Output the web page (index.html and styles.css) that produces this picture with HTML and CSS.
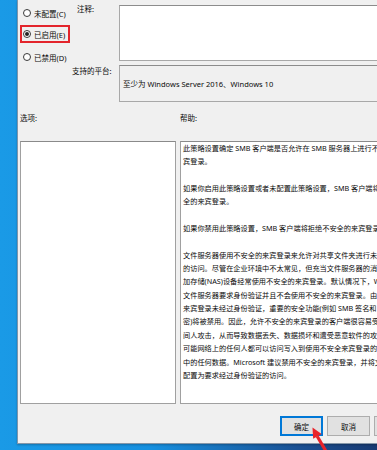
FILE: index.html
```html
<!DOCTYPE html>
<html lang="zh-CN">
<head>
<meta charset="utf-8">
<title>策略设置</title>
<link rel="stylesheet" href="styles.css">
</head>
<body>
<div class="screen">
  <div class="dialog">
    <div class="settings">
      <div class="radios">
        <div class="radio"><span class="dot"></span><span>未配置(C)</span></div>
        <div class="radio selected"><span class="dot checked"></span><span>已启用(E)</span></div>
        <div class="radio last"><span class="dot"></span><span>已禁用(D)</span></div>
      </div>
      <div class="label label-note">注释:</div>
      <div class="box box-note"></div>
      <div class="label label-platform">支持的平台:</div>
      <div class="box box-platform">至少为 Windows Server 2016、Windows 10</div>
    </div>
    <div class="panes">
      <div class="pane-title">选项:</div>
      <div class="pane-title">帮助:</div>
      <div class="pane options"></div>
      <div class="pane help">
        <div class="para">
          <div class="ln">此策略设置确定 SMB 客户端是否允许在 SMB 服务器上进行不安全的来</div>
          <div class="ln">宾登录。</div>
        </div>
        <div class="para">
          <div class="ln">如果你启用此策略设置或者未配置此策略设置，SMB 客户端将允许不安</div>
          <div class="ln">全的来宾登录。</div>
        </div>
        <div class="para">
          <div class="ln">如果你禁用此策略设置，SMB 客户端将拒绝不安全的来宾登录。</div>
        </div>
        <div class="para">
          <div class="ln">文件服务器使用不安全的来宾登录来允许对共享文件夹进行未经身份验证</div>
          <div class="ln">的访问。尽管在企业环境中不太常见，但充当文件服务器的消费者网络附</div>
          <div class="ln">加存储(NAS)设备经常使用不安全的来宾登录。默认情况下，Windows</div>
          <div class="ln">文件服务器要求身份验证并且不会使用不安全的来宾登录。由于不安全的</div>
          <div class="ln">来宾登录未经过身份验证，重要的安全功能(例如 SMB 签名和 SMB 加</div>
          <div class="ln">密)将被禁用。因此，允许不安全的来宾登录的客户端很容易受到中</div>
          <div class="ln">间人攻击，从而导致数据丢失、数据损坏和遭受恶意软件的攻击。此外，</div>
          <div class="ln">可能网络上的任何人都可以访问写入到使用不安全来宾登录的文件共享</div>
          <div class="ln">中的任何数据。Microsoft 建议禁用不安全的来宾登录，并将文件服务器</div>
          <div class="ln">配置为要求经过身份验证的访问。</div>
        </div>
      </div>
    </div>
    <div class="buttons">
      <div class="btn default">确定</div>
      <div class="btn">取消</div>
      <div class="btn">应用(A)</div>
    </div>
  </div>
  <svg class="arrow" width="34" height="32" viewBox="0 0 34 32">
    <polygon points="12.5,7.5 21.6,14 13.2,18.8" fill="#e8232a"/>
    <line x1="17.2" y1="16.2" x2="27" y2="33" stroke="#e8232a" stroke-width="3.2"/>
  </svg>
</div>
</body>
</html>
```

FILE: styles.css
```css
html, body {
  margin: 0;
  padding: 0;
}

body {
  width: 377px;
  height: 450px;
  overflow: hidden;
  background: #1499e6;
  font-family: "Noto Sans", "Noto Sans CJK SC", sans-serif;
  color: #0a0a0a;
}

.screen {
  position: relative;
  width: 377px;
  height: 450px;
  overflow: hidden;
  background: linear-gradient(90deg, #1a9ae6 0%, #1690e0 40%, #1a4f92 80%, #183a72 100%);
}

.dialog {
  margin-left: 17px;
  width: 397px;
  height: 443px;
  padding: 0 10px 0 2px;
  background: #f0f0f0;
  border-left: 1px solid #7f95aa;
  border-bottom: 1px solid #8596a8;
  display: flex;
  flex-direction: column;
  box-shadow: 0 1px 2px rgba(0, 0, 0, 0.25);
}

/* ---------- top settings ---------- */
.settings {
  display: grid;
  grid-template-columns: 50px 49px 1fr;
  grid-template-rows: 56px 37px;
  row-gap: 4px;
  padding-top: 5px;
  font-size: 7.5px;
}

.radios {
  grid-row: 1 / 3;
  grid-column: 1;
  display: flex;
  flex-direction: column;
  gap: 3px;
  margin-top: -1px;
}

.radio {
  display: flex;
  align-items: center;
  gap: 3px;
  height: 18px;
  box-sizing: border-box;
  padding-left: 1px;
  border: 2px solid transparent;
  white-space: nowrap;
}

.radio.selected {
  border-color: #e3252c;
}

.radio.last {
  margin-top: 2px;
}

.dot {
  width: 8px;
  height: 8px;
  box-sizing: border-box;
  border: 1px solid #3a3a3a;
  border-radius: 50%;
  background: #fff;
  display: flex;
  align-items: center;
  justify-content: center;
  flex: none;
}

.dot.checked::after {
  content: "";
  width: 4px;
  height: 4px;
  border-radius: 50%;
  background: #222;
}

.label {
  grid-column: 2;
  line-height: 10px;
  white-space: nowrap;
}

.label-note {
  grid-row: 1;
  padding-left: 7px;
  margin-top: -1px;
}

.label-platform {
  grid-row: 2;
  padding-left: 2px;
  padding-top: 1px;
}

.box {
  grid-column: 3;
  box-sizing: border-box;
  border: 1px solid #a8a8a8;
  border-top-color: #8c8c8c;
}

.box-note {
  grid-row: 1;
  background: #fff;
}

.box-platform {
  grid-row: 2;
  background: #f0f0f0;
  display: flex;
  align-items: center;
  padding-left: 3px;
  white-space: nowrap;
}

/* ---------- panes ---------- */
.panes {
  display: grid;
  grid-template-columns: 156px 1fr;
  grid-template-rows: 10px 263px;
  column-gap: 4px;
  row-gap: 18px;
  margin-top: 11px;
  font-size: 7.5px;
}

.pane-title {
  line-height: 10px;
  white-space: nowrap;
}

.pane {
  box-sizing: border-box;
  background: #fff;
  border: 1px solid #a0a0a0;
  border-top-color: #8a8a8a;
  overflow: hidden;
}

.help {
  padding: 0 2px;
  font-size: 7.2px;
  line-height: 13.35px;
}

.para {
  margin-bottom: 13.35px;
}

.ln {
  white-space: nowrap;
}

/* ---------- buttons ---------- */
.buttons {
  display: flex;
  justify-content: flex-end;
  gap: 4px;
  margin-top: 12px;
}

.btn {
  width: 43px;
  height: 20px;
  box-sizing: border-box;
  border: 1px solid #adadad;
  background: #e1e1e1;
  font-size: 7.5px;
  display: flex;
  align-items: center;
  justify-content: center;
  white-space: nowrap;
}

.btn.default {
  border: 2px solid #0078d7;
}

/* ---------- overlay arrow ---------- */
.arrow {
  position: absolute;
  left: 300px;
  top: 420px;
}
```
